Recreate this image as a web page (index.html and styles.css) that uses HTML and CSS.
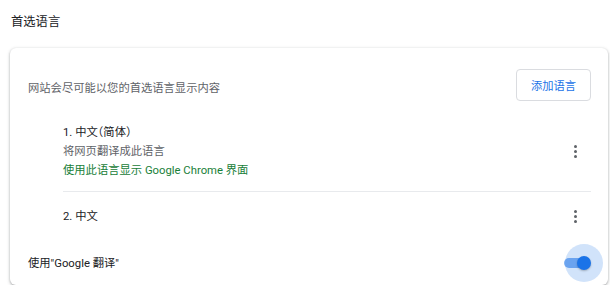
FILE: index.html
```html
<!DOCTYPE html>
<html lang="zh-CN">
<head>
<meta charset="utf-8">
<title>首选语言</title>
<link rel="stylesheet" href="styles.css">
</head>
<body>
<div class="page">
  <div class="title">首选语言</div>
  <div class="card">
    <div class="header">
      <div class="desc">网站会尽可能以您的首选语言显示内容</div>
      <button class="add-btn">添加语言</button>
    </div>
    <div class="list">
      <div class="item item-first">
        <div class="item-text">
          <div class="label">1. 中文（简体）</div>
          <div class="sub">将网页翻译成此语言</div>
          <div class="green">使用此语言显示 Google Chrome 界面</div>
        </div>
        <div class="kebab"><span></span><span></span><span></span></div>
      </div>
      <div class="item item-second">
        <div class="item-text">
          <div class="label">2. 中文</div>
        </div>
        <div class="kebab"><span></span><span></span><span></span></div>
      </div>
    </div>
    <div class="toggle-row">
      <div class="toggle-label">使用"Google 翻译"</div>
      <div class="toggle">
        <div class="track"></div>
        <div class="halo"></div>
        <div class="knob"></div>
      </div>
    </div>
  </div>
</div>
</body>
</html>
```

FILE: styles.css
```css
html, body {
  margin: 0;
  padding: 0;
  background: #ffffff;
}
body {
  font-family: Roboto, "Noto Sans CJK SC", sans-serif;
  font-size: 11.3px;
  color: #202124;
}
.page {
  padding: 12px 2px 0 10px;
}
.title {
  padding-left: 1px;
  font-size: 12.3px;
  line-height: 20px;
  height: 20px;
  color: #202124;
}
.card {
  margin-top: 16px;
  height: 237px;
  box-sizing: border-box;
  border-radius: 6px;
  background: #fff;
  box-shadow: 0 1px 2px rgba(60, 64, 67, 0.3), 0 1px 3px 1px rgba(60, 64, 67, 0.15);
  padding: 21px 17px 0 18px;
  display: flex;
  flex-direction: column;
}
.header {
  display: flex;
  justify-content: space-between;
  align-items: center;
  height: 32px;
}
.desc {
  color: #5f6368;
  padding-top: 6px;
  line-height: 19px;
}
.add-btn {
  font-family: Roboto, "Noto Sans CJK SC", sans-serif;
  font-size: 11.3px;
  color: #1a73e8;
  background: #fff;
  border: 1px solid #dadce0;
  border-radius: 4px;
  width: 75px;
  height: 32px;
  padding: 0;
  margin: 0;
}
.list {
  margin-top: 22px;
  padding-left: 35px;
}
.item {
  display: flex;
  justify-content: space-between;
  align-items: center;
  padding: 13px 0;
}
.item-first {
  padding-top: 0;
  padding-bottom: 11px;
  border-bottom: 1px solid #e8eaed;
}
.item-second {
  padding-top: 15px;
  padding-bottom: 11px;
}
.item-text {
  line-height: 19px;
}
.label {
  color: #202124;
  font-feature-settings: "halt";
}
.sub {
  color: #5f6368;
}
.green {
  color: #188038;
}
.kebab {
  width: 32px;
  height: 19px;
  display: flex;
  flex-direction: column;
  align-items: center;
  justify-content: center;
  gap: 2px;
}
.kebab span {
  width: 3px;
  height: 3px;
  border-radius: 50%;
  background: #5f6368;
}
.toggle-row {
  margin-top: 8px;
  height: 36px;
  display: flex;
  justify-content: space-between;
  align-items: center;
}
.toggle-label {
  color: #202124;
  line-height: 19px;
}
.toggle {
  position: relative;
  width: 27px;
  height: 14px;
}
.track {
  position: absolute;
  left: 0;
  top: 2px;
  width: 25px;
  height: 10px;
  border-radius: 5px;
  background: #7fb0f2;
}
.halo {
  position: absolute;
  right: -12px;
  top: -12px;
  width: 38px;
  height: 38px;
  border-radius: 50%;
  background: rgba(26, 115, 232, 0.2);
}
.knob {
  position: absolute;
  right: 0;
  top: 0;
  width: 14px;
  height: 14px;
  border-radius: 50%;
  background: #1a73e8;
  box-shadow: 0 1px 2px rgba(0, 0, 0, 0.25);
}
```
